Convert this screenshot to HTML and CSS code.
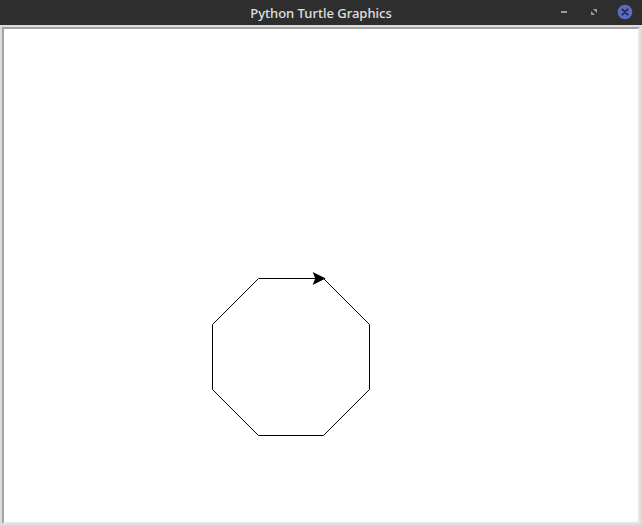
FILE: index.html
```html
<!DOCTYPE html>
<html>
<head>
<meta charset="utf-8">
<title>Python Turtle Graphics</title>
<link rel="stylesheet" href="styles.css">
</head>
<body>
<div class="window">
  <header class="titlebar">
    <span class="title">Python Turtle Graphics</span>
    <div class="controls">
      <svg class="btn" width="14" height="14" viewBox="0 0 14 14"><rect x="4" y="6" width="6" height="2" fill="#9b9b9b"/></svg>
      <svg class="btn" width="14" height="14" viewBox="0 0 14 14"><polygon points="6,4 10,4 10,8" fill="#9b9b9b"/><polygon points="4,6 8,10 4,10" fill="#9b9b9b"/></svg>
      <svg class="btn close" width="16" height="16" viewBox="0 0 16 16"><circle cx="8" cy="8" r="7.3" fill="#5a6cc4"/><path d="M5.3 5.3 L10.7 10.7 M10.7 5.3 L5.3 10.7" stroke="#262a3a" stroke-width="1.8" stroke-linecap="round"/></svg>
    </div>
  </header>
  <main class="frame">
    <div class="canvas">
      <svg class="drawing" width="634" height="493" viewBox="0 0 634 493">
        <polygon points="254.5,249.5 319.5,249.5 365.5,295.5 365.5,360.5 319.5,406.5 254.5,406.5 208.5,360.5 208.5,295.5" fill="none" stroke="#000" stroke-width="1"/>
        <polygon points="320,249.5 310,244.5 312,249.5 310,254.5" fill="#000" stroke="#000" stroke-width="1.4" stroke-linejoin="miter"/>
      </svg>
    </div>
  </main>
</div>
</body>
</html>
```
FILE: styles.css
```css
html, body {
  margin: 0;
  padding: 0;
  width: 642px;
  height: 526px;
  overflow: hidden;
  background: #dcdcdc;
}
.window {
  display: flex;
  flex-direction: column;
  width: 642px;
  height: 526px;
}
.titlebar {
  position: relative;
  height: 25px;
  background: #2e2e2e;
  display: flex;
  align-items: center;
  justify-content: center;
  flex: none;
}
.title {
  font-family: "Noto Sans", "DejaVu Sans", sans-serif;
  font-size: 13px;
  font-weight: 500;
  color: #e0e0e0;
  line-height: 25px;
  padding-top: 1px;
}
.controls {
  position: absolute;
  right: 9px;
  top: 4px;
  display: flex;
  gap: 16px;
  align-items: center;
}
.btn { display: block; }
.frame {
  flex: 1;
  display: flex;
  padding: 2px;
  background: #dcdcdc;
}
.canvas {
  flex: 1;
  background: #fff;
  border-left: 2px solid #a3a3a3;
  border-top: 2px solid #a3a3a3;
  border-right: 2px solid #e6e6e6;
  border-bottom: 2px solid #e6e6e6;
  overflow: hidden;
}
.drawing { display: block; }
```
